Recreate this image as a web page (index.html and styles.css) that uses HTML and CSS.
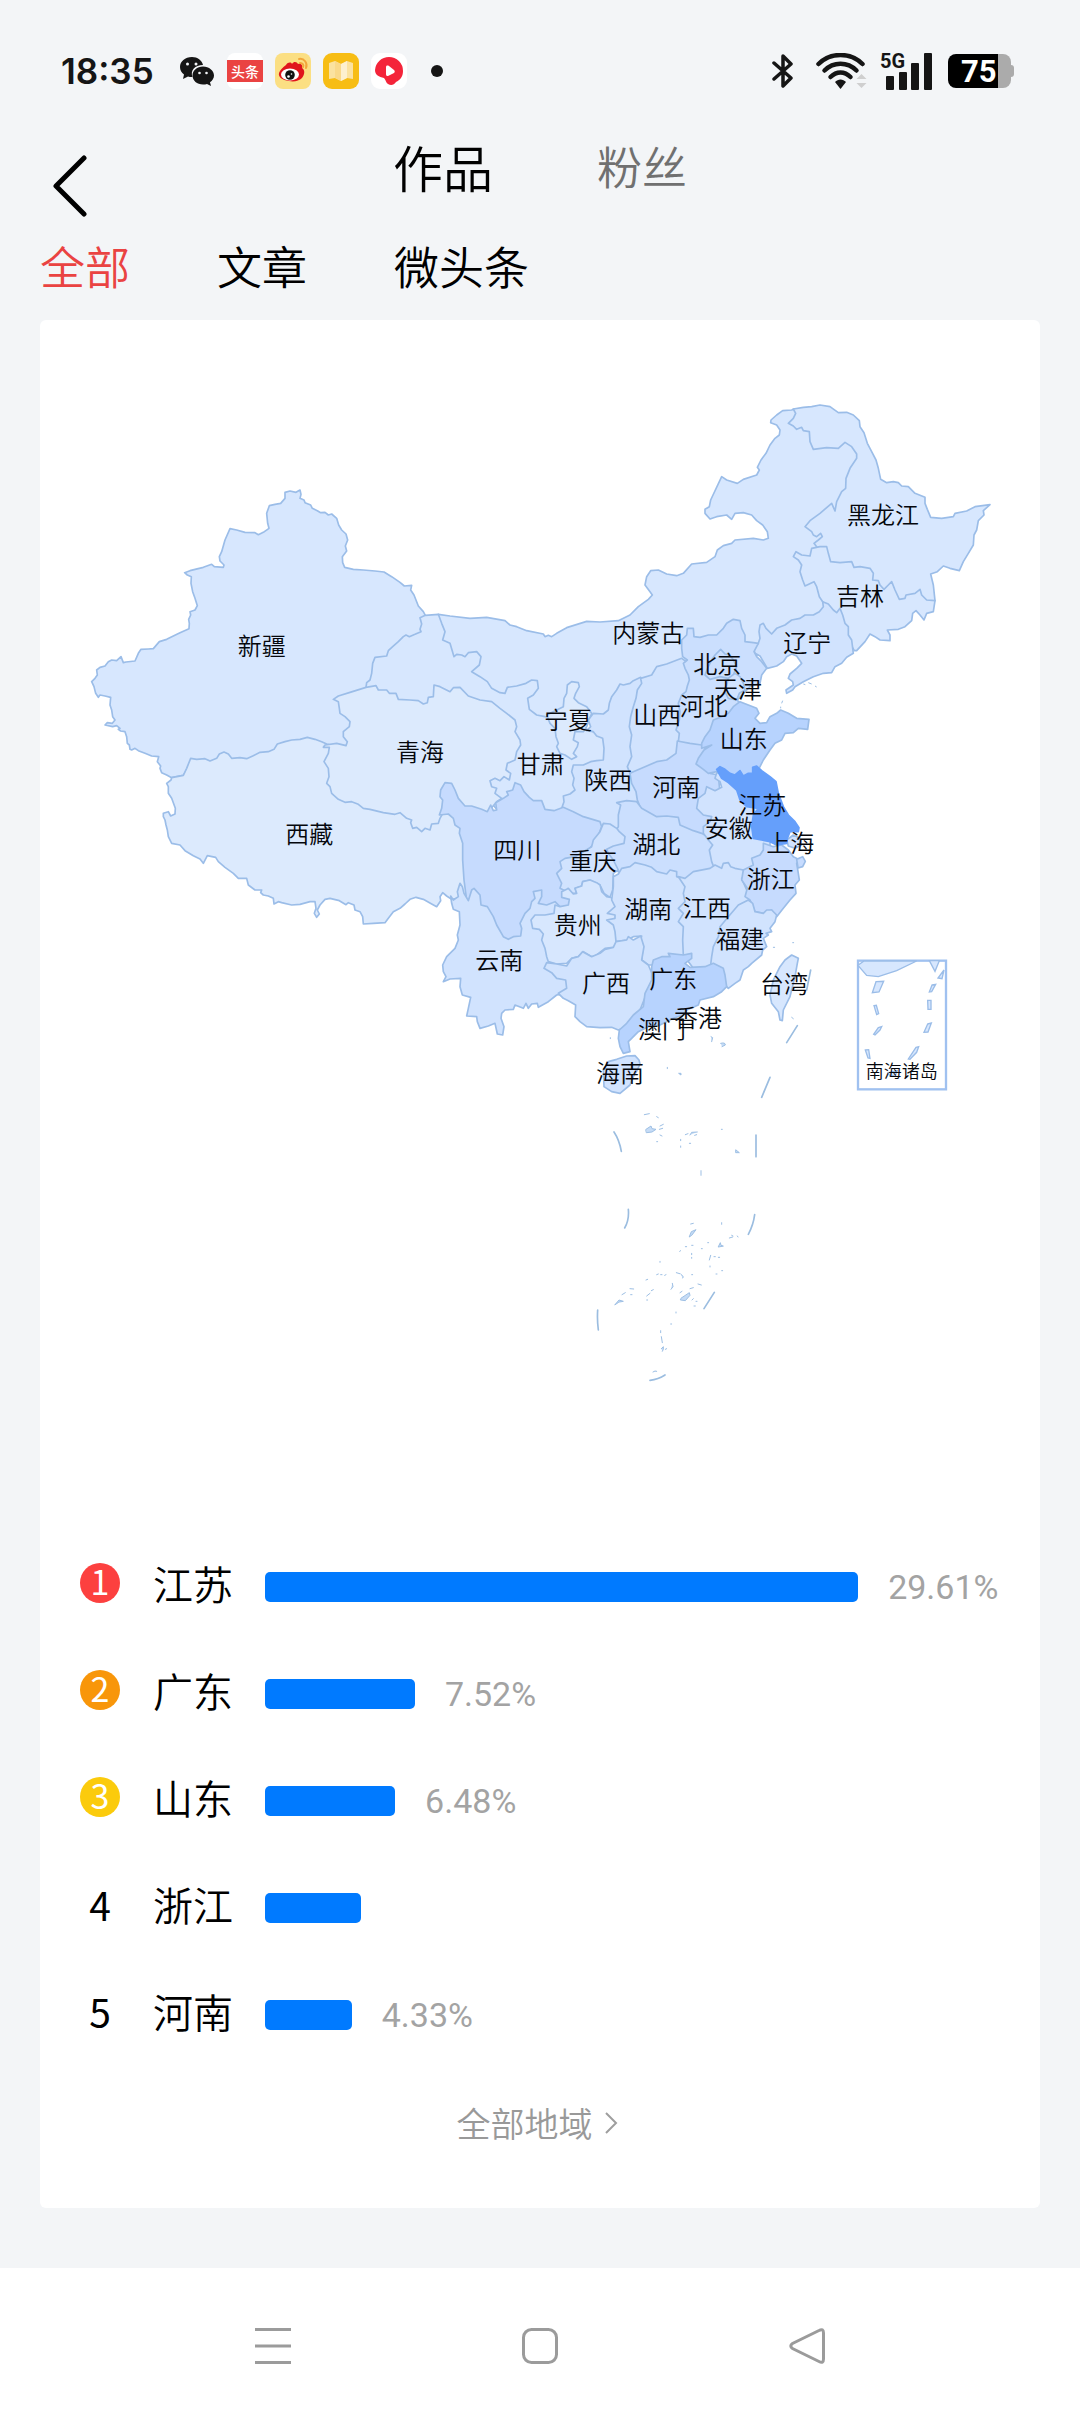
FILE: index.html
```html
<!DOCTYPE html>
<html lang="zh-CN">
<head>
  <meta charset="UTF-8" />
  <meta name="viewport" content="width=device-width, initial-scale=1.0" />
  <title>作品 - 地域分布</title>
  <link rel="stylesheet" href="styles.css">
</head>
<body>
  <div class="status">
    <span class="time">18:35</span>
    <div class="apps">
      <svg class="app" viewBox="0 0 36 36">
        <path d="M13 4C6 4 1 8.500 1 14c0 3 1.500 5.500 4 7.500L4 26l5-2.500c1.500.4 3 .6 4.500.5C11 17 16 12 24 12 23 7.500 18.500 4 13 4z" fill="#151515"/>
        <path d="M24 13.500c-6 0-10.500 4-10.500 9S18 31.500 24 31.500c1.500 0 2.800-.2 4-.6l4 2-1-3.600c2.400-1.700 4-4 4-6.800 0-5-5-9-11-9z" fill="#151515"/>
        <g fill="#f3f5f7"><circle cx="8.500" cy="11" r="1.500"/><circle cx="17" cy="11" r="1.500"/><circle cx="20.500" cy="20" r="1.300"/><circle cx="27.500" cy="20" r="1.300"/></g>
      </svg>
      <div class="toutiao"><span>头条</span></div>
      <svg class="app" viewBox="0 0 36 36">
        <rect width="36" height="36" rx="8" fill="#fbdf83"/>
        <path d="M11 12c2-3 5-3 6-1 2-3 5-2 6 0 3-1 5 1 4 4 3 2 3 6 0 10-3 3-8 4-13 3C7 27 3 24 4 20c1-3 4-6 7-8z" fill="#e0141c"/>
        <ellipse cx="15" cy="21.500" rx="9" ry="6" fill="#fff"/>
        <circle cx="15" cy="22" r="4.800" fill="#111"/><circle cx="13.500" cy="23.500" r="1.300" fill="#fff"/><circle cx="16.500" cy="21" r=".8" fill="#fff"/>
        <path d="M24 6c5-1 9 4 7 9M25 10c3 0 4 2 3 4" fill="none" stroke="#f2a63b" stroke-width="2" stroke-linecap="round"/>
      </svg>
      <svg class="app" viewBox="0 0 36 36">
        <rect width="36" height="36" rx="9" fill="#f7bd14"/>
        <path d="M6 10l6-2 6 3 6-3 6 2v16l-6-1-6 3-6-3-6 1z" fill="#fbe2a0"/>
        <path d="M18 11l6-3v17l-6 3z" fill="#fdf0cf"/><path d="M12 8l6 3v17l-6-3z" fill="#fad98a"/>
      </svg>
      <svg class="app" viewBox="0 0 36 36">
        <rect width="36" height="36" rx="9" fill="#fff"/>
        <path d="M18 4a14 14 0 0 1 14 14c0 6-3 9-7 11-2 3-5 4-8 2-2-1-2-4-4-6-5-1-9-3-9-8A14 14 0 0 1 18 4z" fill="#f4243a"/>
        <path d="M15 14c0-1 1-2 3-1l5 4c1 1 1 2 0 3l-6 3c-1 0-2 0-2-2z" fill="#fff"/>
      </svg>
    </div>
    <span class="more"></span>
    <div class="signals">
      <svg class="bluetooth" viewBox="0 0 22 36"><path d="M2 10l17 15-8 8V3l8 8L2 26" fill="none" stroke="#151515" stroke-width="3.500" stroke-linecap="round" stroke-linejoin="round"/></svg>
      <svg class="wifi" viewBox="0 0 52 36">
        <g fill="none" stroke="#151515" stroke-width="4.500" stroke-linecap="round"><path d="M2.500 11c12-12 32-12 44 0"/><path d="M8.500 17.500c9-9 23-9 32 0"/><path d="M14.500 24c6-6 14-6 20 0"/></g>
        <path d="M19 29c3-3.500 8-3.500 11 0l-5.500 7z" fill="#151515"/>
        <path d="M40.500 26l5-5 5 5zM40.500 30l5 5 5-5z" fill="#cfcfcf"/>
      </svg>
      <svg class="cell" viewBox="0 0 52 38">
        <text x="0" y="16" class="net">5G</text>
        <g fill="#151515"><rect x="6" y="24" width="8" height="14" rx="1"/><rect x="19" y="20" width="8" height="18" rx="1"/><rect x="31" y="11" width="8" height="27" rx="1"/><rect x="44" y="1" width="8" height="37" rx="1"/></g>
      </svg>
      <div class="battery"><span>75</span></div>
    </div>
  </div>

  <header class="header">
    <button class="back" aria-label="返回">
      <svg viewBox="0 0 36 62"><path d="M32 3L4 31l28 28" fill="none" stroke="#000" stroke-width="5" stroke-linecap="round" stroke-linejoin="round"/></svg>
    </button>
    <div class="tabs">
      <button class="tab active">作品</button>
      <button class="tab">粉丝</button>
    </div>
  </header>

  <nav class="filters">
    <button class="filter active">全部</button>
    <button class="filter">文章</button>
    <button class="filter">微头条</button>
  </nav>

  <main class="card">
    <svg class="map" viewBox="-1080 -720 3000 3540" role="img">
      <g class="land">
        <!-- 新疆 西藏 -->
        <g transform="translate(-990 -300)">
          <path class="c2" d="M645 97L660 93 678 97 690 90 693 103 690 115 702 120 705 128 722 135 727 145 742 152 752 158 765 157 775 165 785 162 800 175 806 195 815 210 828 222 833 240 826 258 830 273 817 290 818 308 824 322 850 328 880 330 915 333 942 336 965 350 990 367 1003 378 1025 376 1022 390 1032 405 1045 438 1060 455 1066 466 1080 520 1000 600 930 650 920 720 850 850 800 880 640 900 350 930 340 946 305 953 290 945 275 938 270 925 272 918 262 905 266 890 245 888 225 880 205 872 195 865 185 870 180 868 178 855 172 850 170 830 165 815 152 813 145 808 150 805 140 797 128 800 105 795 112 788 127 790 135 780 128 770 125 750 120 735 122 712 105 708 90 705 85 712 77 700 72 680 65 665 75 655 82 645 80 630 90 622 105 618 115 605 125 600 140 602 153 590 160 608 168 606 195 603 205 580 213 568 235 567 250 566 268 545 290 538 330 518 357 506 358 490 356 478 362 465 360 455 375 450 382 437 375 415 368 395 363 370 364 350 352 345 344 338 360 332 400 322 425 313 433 320 460 322 462 315 450 303 448 290 455 275 465 240 480 206 500 210 525 217 555 218 565 224 580 217 597 205 593 190 590 160 598 137 615 133 632 130 645 115Z"/>
          <path class="c1" d="M305 953L340 946 350 925 362 895 380 898 405 896 420 903 440 895 448 882 462 876 475 882 485 895 510 893 530 896 548 888 570 877 595 875 612 868 622 852 645 845 665 840 690 838 712 832 735 838 755 845 770 852 800 860 900 1000 1110 1030 1150 1070 1200 1100 1200 1310 1145 1318 1130 1308 1118 1298 1110 1310 1112 1322 1100 1340 1085 1332 1060 1318 1038 1312 1020 1318 1005 1332 990 1345 970 1355 955 1375 945 1388 910 1390 880 1392 878 1370 870 1355 855 1350 852 1335 835 1328 828 1334 808 1322 780 1315 765 1318 750 1335 742 1350 748 1362 740 1372 733 1360 738 1345 735 1325 720 1325 690 1333 665 1335 635 1328 625 1325 612 1332 610 1315 595 1308 580 1305 572 1298 575 1290 555 1290 535 1275 530 1255 505 1255 490 1240 465 1222 445 1205 437 1192 412 1187 400 1210 390 1197 370 1187 345 1172 330 1155 305 1150 295 1130 292 1110 288 1095 285 1080 280 1070 280 1060 295 1055 302 1068 315 1062 316 1045 305 1015 295 1000 295 980 290 970 303 960Z"/>
        </g>
        <!-- 内蒙古 -->
        <path class="c2" d="M115 163L150 168 210 175 260 172 315 182 330 195 350 200 380 212 430 222 435 230 445 226 455 230 470 220 500 203 560 184 600 186 655 182 690 165 715 140 745 118 757 105 750 95 735 75 740 50 752 32 775 30 800 42 830 47 850 40 875 12 920 7 945 -10 952 -30 970 -43 995 -50 1005 -60 1060 -65 1090 -60 1105 -65 1102 -85 1088 -105 1070 -118 1055 -135 1030 -142 1005 -140 995 -122 980 -135 950 -130 930 -123 915 -140 915 -152 928 -160 932 -180 965 -250 980 -240 1012 -230 1030 -242 1070 -255 1078 -270 1072 -278 1083 -300 1098 -320 1110 -345 1125 -365 1138 -375 1140 -390 1130 -405 1112 -412 1113 -420 1130 -435 1148 -448 1175 -450 1182 -453 1260 -390 1380 -340 1380 -160 1280 -80 1270 20 1280 100 1290 160 1260 180 1150 250 1060 290 880 330 800 380 700 450 640 500 500 470 440 490 350 430 320 420 200 370 150 330 80 200Z"/>
        <!-- 黑龙江 吉林 辽宁 -->
        <g transform="translate(780 -540)">
          <path class="c2" d="M400 87L430 82 455 80 480 75 510 80 535 98 560 97 580 105 598 122 600 140 612 158 622 190 635 215 648 240 655 265 662 298 680 308 700 305 715 308 725 318 745 320 765 340 795 352 795 370 802 388 812 412 845 415 880 410 885 400 920 393 945 380 990 374 970 392 972 405 955 422 950 450 942 465 940 495 925 520 910 545 898 572 870 565 850 558 832 575 812 582 820 615 825 662 760 680 690 680 600 620 520 600 480 520 470 500 462 490 475 480 487 470 482 460 470 470 460 465 455 455 435 440 450 422 480 400 515 370 525 393 530 365 545 335 557 325 558 295 570 265 590 235 590 222 575 200 555 187 535 205 500 203 460 208 450 185 448 155 430 152 425 142 410 148 400 138 385 130 400 115 407 100Z"/>
          <path class="c2" d="M400 530L408 515 425 525 450 528 455 505 480 500 500 500 505 520 512 545 540 548 575 545 582 562 600 560 630 565 640 580 638 600 655 602 660 615 672 628 685 615 695 605 705 630 718 658 735 655 738 645 765 640 780 628 785 645 800 660 825 662 820 695 800 700 792 720 780 705 768 692 758 700 755 722 735 740 715 748 682 750 690 765 690 782 660 780 645 770 630 762 615 785 590 812 583 812 540 740 500 690 488 665 478 650 470 620 462 605 435 618 428 600 420 575 425 555 415 540Z"/>
          <path class="c3" d="M300 735L310 730 318 745 335 762 350 745 375 735 395 720 420 715 435 705 460 705 478 695 490 680 488 665 505 672 520 690 530 698 540 685 548 705 555 730 565 740 565 765 575 780 580 820 560 832 545 850 525 860 515 878 490 880 460 890 430 905 405 920 398 930 380 940 378 930 400 915 398 905 385 895 390 882 410 865 425 850 410 828 395 822 380 830 370 845 350 858 322 865 310 845 300 828 285 820 280 805 295 790 300 775 297 755Z"/>
        </g>
        <!-- 甘肃 青海 宁夏 -->
        <path class="c2" d="M76 166L115 163 125 190 135 215 128 240 150 250 162 290 170 283 185 285 195 290 205 278 230 275 243 290 238 315 215 335 240 350 262 365 275 385 300 398 315 400 322 382 350 378 378 370 395 360 412 362 415 385 400 405 383 415 388 448 410 465 435 470 500 480 540 500 620 530 625 610 560 640 540 720 500 770 400 760 300 760 250 700 250 500 100 450 0 430 -80 450 -102 382 -100 368 -90 360 -85 340 -82 310 -75 292 -40 288 -35 272 -22 260 -5 245 10 230 18 225 28 230 45 223 63 215 60 208 65 192 60 173Z"/>
        <path class="c1" d="M-200 418L-185 408 -150 397 -102 382 -72 377 -65 390 -40 390 -32 400 -12 400 -5 418 30 420 55 422 70 432 82 428 85 412 100 410 102 375 120 380 150 395 160 383 180 382 205 408 240 420 275 425 300 445 320 460 345 480 350 500 345 515 360 540 362 555 350 575 345 600 322 610 318 630 332 640 328 660 312 650 300 662 285 655 270 662 275 680 290 685 285 700 305 715 290 725 265 755 250 780 180 760 150 720 120 775 115 790 95 792 90 810 75 805 65 815 50 802 38 805 32 788 35 780 20 775 0 758 -15 763 -50 758 -90 748 -110 745 -125 733 -145 725 -165 727 -185 718 -205 700 -210 680 -220 670 -213 650 -215 625 -228 605 -215 580 -212 562 -230 562 -225 555 -190 550 -162 557 -158 545 -170 530 -170 515 -152 500 -150 485 -165 470 -180 460 -182 445 -185 425Z"/>
        <path class="c1" d="M490 440L492 415 500 400 502 375 515 365 535 368 538 380 527 400 522 415 535 428 560 440 575 460 560 500 550 515 525 515 520 540 535 548 532 560 520 580 530 590 515 598 495 585 480 580 470 560 475 550 468 530 465 505 450 490 440 465Z"/>
        <!-- 陕西 山西 河北 北京 天津 -->
        <path class="c3" d="M722 352L700 362 690 370 670 375 660 372 650 390 635 410 628 430 625 450 610 462 580 460 565 480 572 500 560 512 580 515 590 528 608 535 612 565 610 600 590 602 572 605 550 615 520 615 515 635 522 655 518 675 525 690 510 702 490 708 492 725 485 745 500 770 600 820 640 830 720 770 720 700 740 640 740 400Z"/>
        <path class="c3" d="M722 355L755 345 770 320 800 312 845 295 880 320 880 400 860 540 850 600 760 660 690 640 682 620 695 590 690 560 695 525 688 500 692 470 700 440 708 415 712 390 725 370Z"/>
        <path class="c4" d="M845 240L860 225 862 205 880 205 882 230 900 232 925 225 950 225 970 205 980 190 1000 178 1020 182 1025 205 1035 225 1035 245 1060 248 1075 250 1062 275 1070 290 1085 305 1100 325 1085 345 1080 370 1050 380 1030 400 1012 420 1020 432 1000 470 950 520 920 560 890 580 840 560 835 545 838 520 828 510 838 480 840 455 835 430 845 405 858 395 862 378 868 360 865 345 855 325 850 310 862 300 848 290 845 265Z"/>
        <path class="c4" d="M962 268L975 282 990 285 1000 300 1010 320 1000 345 985 355 960 350 930 358 915 345 925 320 935 300 945 285Z"/>
        <path class="c3" d="M985 355L1005 340 1020 350 1030 370 1035 390 1018 400 1010 420 985 415 975 395 980 375Z"/>
        <!-- 河南 山东 四川 湖北 重庆 安徽 -->
        <path class="c5" d="M832 543L870 550 905 555 930 580 930 640 955 645 960 700 950 780 910 830 840 820 760 800 720 740 712 720 708 695 695 670 690 640 700 635 735 620 770 605 800 600 828 580Z"/>
        <path class="c6" d="M1020 425L1045 435 1070 445 1077 460 1065 475 1080 490 1100 488 1110 470 1130 460 1142 450 1165 460 1190 475 1227 478 1223 508 1195 505 1180 518 1155 520 1145 540 1125 550 1110 570 1090 600 1075 630 1050 660 960 640 950 635 925 640 910 628 888 612 895 595 912 570 935 555 905 565 905 550 915 530 930 510 940 480 965 470 985 460 1000 440Z"/>
        <path class="c5" d="M118 765L125 745 128 720 120 710 122 690 135 668 155 670 165 690 175 715 195 738 215 738 245 748 262 755 272 735 280 752 290 750 287 728 310 715 325 705 320 695 338 690 345 668 362 675 372 695 388 712 400 722 425 722 435 748 462 752 490 742 520 755 550 770 600 785 605 800 590 840 540 900 530 980 520 1040 460 1080 420 1100 330 1180 280 1120 200 1020 192 960 188 900 188 850 178 820 180 805 165 795 160 775 145 762Z"/>
        <path class="c4" d="M655 765L662 735 650 728 680 722 710 725 725 745 770 770 800 768 835 772 840 795 880 812 905 820 960 850 950 930 860 965 780 960 700 950 640 930 620 930 620 850 655 800Z"/>
        <path class="c3" d="M610 790L630 792 650 805 658 815 675 830 672 850 640 858 620 868 625 880 640 900 655 930 640 940 638 990 630 1012 612 1000 600 975 570 960 548 965 545 978 525 985 530 1000 510 1000 480 985 485 970 470 940 485 925 480 905 495 895 525 890 550 875 575 860 580 840 600 815Z"/>
        <path class="c3" d="M950 638L945 655 960 665 965 682 945 692 920 680 915 700 895 715 890 745 910 765 935 770 930 785 910 800 910 820 925 840 938 855 928 870 935 905 945 930 1020 960 1080 930 1110 860 1110 800 1060 700 980 640Z"/>
        <!-- 云南 贵州 湖南 广西 -->
        <g transform="translate(0 900)">
          <path class="c3" d="M152 108L160 120 175 110 172 95 180 70 187 80 192 100 205 122 215 90 222 85 240 105 243 135 262 140 280 170 290 195 310 230 325 238 340 230 362 228 365 205 360 190 375 160 390 145 395 125 405 115 400 95 425 90 425 110 415 130 440 135 465 125 500 160 480 260 480 340 520 380 478 404 470 405 445 425 415 442 412 430 395 432 385 445 378 430 370 445 345 435 340 448 315 450 305 460 303 475 312 500 308 525 292 522 285 490 265 498 240 505 232 485 230 470 200 468 205 445 212 412 187 405 180 380 182 355 150 357 130 365 138 350 130 335 128 315 140 290 165 265 175 240 172 225 180 195 178 155 160 148 155 130Z"/>
          <path class="c2" d="M505 85L520 102 530 100 525 85 545 78 548 65 570 60 590 68 600 75 605 95 620 110 632 112 660 130 660 240 640 262 615 265 590 285 575 290 550 275 535 290 515 295 500 310 470 312 445 305 440 290 435 265 425 240 430 222 418 208 398 205 393 180 405 165 435 165 462 160 465 135 480 140 505 135 508 118 485 112 485 95 500 88Z"/>
          <path class="c3" d="M640 50L655 42 665 25 690 20 705 8 735 15 755 22 770 35 800 42 810 30 830 35 830 50 870 62 880 200 870 275 830 300 790 310 770 315 745 315 725 300 728 270 722 240 725 228 700 230 680 240 648 245 645 215 640 195 620 180 645 175 645 165 622 160 645 140 635 120 640 80Z"/>
          <path class="c3" d="M432 325L440 308 470 312 500 318 515 295 535 290 548 275 575 290 600 280 615 268 640 262 648 245 680 240 685 230 700 240 722 228 732 260 725 300 745 315 760 350 720 450 680 500 655 510 635 502 600 503 560 500 540 485 525 470 527 435 505 422 490 415 475 400 500 385 497 360 470 355 455 338Z"/>
        </g>
        <!-- 江西 浙江 福建 广东 江苏 上海 -->
        <path class="c3" d="M835 950L855 955 880 935 930 925 945 915 965 925 970 910 985 908 992 920 1005 925 1030 930 1035 945 1025 955 1038 985 1060 1030 1010 1080 970 1120 960 1200 930 1225 880 1225 850 1185 848 1140 850 1100 835 1085 850 1060 835 1045 855 1025 850 1000 855 980Z"/>
        <g transform="translate(780 420)">
          <path class="c5" d="M310 430L340 440 365 435 385 450 400 470 420 480 410 490 415 520 418 540 405 555 408 580 390 600 370 625 350 650 335 630 310 640 285 635 270 600 255 590 262 565 245 540 250 510 280 495 275 475 300 465 310 450Z"/>
          <path class="c5" d="M410 478L428 470 436 484 428 500 414 504Z"/>
          <path class="c3" d="M265 600L278 610 285 635 310 640 320 630 335 630 350 645 345 665 330 685 335 695 318 700 325 705 310 715 320 740 308 750 305 765 275 790 265 800 250 810 240 840 225 850 205 865 190 850 150 810 155 770 160 740 175 710 180 680 205 650 235 615Z"/>
        </g>
        <path class="c6" d="M755 1220L760 1200 785 1190 810 1190 805 1180 850 1185 875 1180 875 1195 855 1210 870 1222 915 1220 940 1210 970 1225 975 1245 980 1280 965 1295 940 1310 900 1320 895 1335 860 1350 850 1365 820 1375 780 1395 745 1400 715 1415 695 1435 685 1445 690 1475 670 1480 660 1460 655 1435 658 1410 680 1390 700 1365 730 1340 735 1300 755 1260Z"/>
        <path class="c3" d="M1160 840L1180 825 1200 835 1205 855 1185 865 1165 858Z"/>
        <path class="c7" d="M950 628L960 620 975 628 990 640 1005 645 1020 632 1030 648 1045 640 1058 640 1058 622 1070 618 1085 632 1110 650 1128 665 1135 700 1150 740 1165 765 1185 785 1197 803 1195 815 1170 815 1162 835 1160 850 1130 855 1110 845 1060 835 1055 800 1060 765 1075 745 1040 740 1020 720 1010 690 985 668 965 655Z"/>
        <!-- 海南 台湾 -->
        <path class="c3" d="M610 1530L625 1505 650 1498 680 1488 705 1487 717 1500 720 1512 712 1530 700 1550 690 1575 660 1600 635 1595 612 1580Z"/>
        <path class="c2" d="M1175 1185L1195 1195 1192 1210 1185 1250 1170 1310 1150 1350 1147 1382 1140 1380 1135 1355 1115 1330 1110 1305 1120 1260 1140 1220 1155 1200Z"/>
      </g>

      <!-- 南海断续线与岛礁 -->
      <g class="sea" transform="translate(480 1320)">
        <path d="M162 396Q178 420 184 454M588 405V470M205 628Q208 660 194 684M584 644Q580 675 565 703M463 877L432 926M113 930Q111 960 115 990M270 1141Q295 1138 315 1125M712 77L680 128M630 232L605 292M752 -90L740 -30"/>
        <path class="isle" d="M453 110l5 3-3 12M482 130q14-4 14 5l-10 5M357 220h6v4zM528 450l10 8h-10zM253 344l15-3M290 350l5 3M258 388l15-10 3 8 12 2-12 8-16 2zM300 378l10-5M298 388l10-3M300 405l6 3M376 404l8-3M390 405l5-8 17-1M404 406l6-2M388 710l6-15 14-6-12 16zM392 672l8-2M485 668v5M475 740l6-12 2 8 6 2zM508 714l10-3M515 706l4 2M532 708l2 3M448 780l4-14M450 798v3M462 770h4M475 772h4M395 736h4M376 740h4M359 754l3-2M395 760v4M395 772v3M300 784v3M443 728h3M424 746h3M485 812h3M468 822h3M290 824l5-2M302 824h4M314 826l4-2M258 840l5-2M349 818l10 3M362 822l8 8-2 4M395 824h3M414 852l10 3M333 868l6-8-2-10M186 884l10-6M210 866l11 1M212 884h4M165 914l12-14 13 4-12 2zM260 888l10-8M274 872l6-3M260 900h3M360 878l6-4M364 894l24-16 2 8-14 16-14-2zM390 866l10-3M396 900l4-4M408 904h3M402 918h4M348 936v3M332 972h3M302 992v6M304 1010l3 18M304 1046l6-6v8l-3 6M316 1048l4-2M279 1116l6-3 5 1M423 512v14M362 418v4M362 438v4M388 430h4M290 425h3M484 388h3M322 202v4M151 113v3M695 52l5 4M640 -158h4M698 -172h3"/>
      </g>
      <g class="isle" transform="translate(780 -540)"><path d="M430 912l6 2M445 908l10 4M465 918l5 3M368 962l-3 8M362 980v5"/></g>

      <!-- 南海诸岛 -->
      <g class="inset" transform="translate(780 420)">
        <rect x="594" y="782" width="264" height="386" class="frame"/>
        <path d="M594 796L612 783H770Q735 800 710 812L655 830 620 826ZM808 782H838L825 814ZM852 810L846 836 834 834ZM648 845L671 844 657 876 637 878ZM816 855L827 853 815 875 808 876ZM642 917L649 916 656 941 650 944ZM803 901H813V928H804ZM655 983L665 980 660 990 645 1005 641 1003ZM803 972L814 969 804 996 792 997ZM616 1050L626 1049 630 1075 624 1074ZM768 1042L776 1040 770 1057 750 1078 745 1077ZM684 1118L712 1112 706 1126 690 1128Z"/>
      </g>

      <g class="names">
        <text x="-415" y="285">新疆</text>
        <text x="60" y="604">青海</text>
        <text x="-272" y="850">西藏</text>
        <text x="745" y="245">内蒙古</text>
        <text x="1449" y="-108">黑龙江</text>
        <text x="1380" y="135">吉林</text>
        <text x="1222" y="275">辽宁</text>
        <text x="952" y="338">北京</text>
        <text x="1014" y="415">天津</text>
        <text x="911" y="465">河北</text>
        <text x="772" y="492">山西</text>
        <text x="1031" y="565">山东</text>
        <text x="504" y="508">宁夏</text>
        <text x="422" y="640">甘肃</text>
        <text x="625" y="686">陕西</text>
        <text x="829" y="707">河南</text>
        <text x="1087" y="762">江苏</text>
        <text x="986" y="830">安徽</text>
        <text x="1171" y="875">上海</text>
        <text x="352" y="897">四川</text>
        <text x="578" y="931">重庆</text>
        <text x="769" y="879">湖北</text>
        <text x="1112" y="985">浙江</text>
        <text x="745" y="1074">湖南</text>
        <text x="921" y="1072">江西</text>
        <text x="1021" y="1165">福建</text>
        <text x="533" y="1123">贵州</text>
        <text x="298" y="1226">云南</text>
        <text x="618" y="1296">广西</text>
        <text x="820" y="1283">广东</text>
        <text x="894" y="1401">香港</text>
        <text x="786" y="1435">澳门</text>
        <text x="660" y="1565">海南</text>
        <text x="1152" y="1299">台湾</text>
        <text x="1505" y="1553" class="small">南海诸岛</text>
      </g>
    </svg>

    <ol class="rank">
      <li><span class="num first">1</span><span class="name">江苏</span><div class="track"><div class="bar" style="width: 80.7%"></div><span class="pct">29.61%</span></div></li>
      <li><span class="num second">2</span><span class="name">广东</span><div class="track"><div class="bar" style="width: 20.4%"></div><span class="pct">7.52%</span></div></li>
      <li><span class="num third">3</span><span class="name">山东</span><div class="track"><div class="bar" style="width: 17.7%"></div><span class="pct">6.48%</span></div></li>
      <li><span class="num">4</span><span class="name">浙江</span><div class="track"><div class="bar" style="width: 13.1%"></div></div></li>
      <li><span class="num">5</span><span class="name">河南</span><div class="track"><div class="bar" style="width: 11.8%"></div><span class="pct">4.33%</span></div></li>
    </ol>

    <a class="all" href="#">全部地域
      <svg viewBox="0 0 14 24"><path d="M2 2l10 10L2 22" fill="none" stroke="#9e9e9e" stroke-width="2"/></svg>
    </a>
  </main>

  <nav class="navbar">
    <button aria-label="最近任务"><svg viewBox="0 0 36 36"><path d="M0 1.500h36M0 18h36M0 34.500h36" stroke="#9b9b9b" stroke-width="3"/></svg></button>
    <button aria-label="主页"><svg viewBox="0 0 36 36"><rect x="1.500" y="1.500" width="33" height="33" rx="8" fill="none" stroke="#9b9b9b" stroke-width="3"/></svg></button>
    <button aria-label="后退"><svg viewBox="0 0 36 36"><path d="M30 2.500Q34.500 0 34.500 5V31Q34.500 36 30 33.500L3.500 20.500Q0 18 3.500 15.500Z" fill="none" stroke="#9b9b9b" stroke-width="3"/></svg></button>
  </nav>
</body>
</html>
```
FILE: styles.css
```css
* { box-sizing: border-box; margin: 0; padding: 0; }
body {
  display: flex;
  flex-direction: column;
  min-height: 100vh;
  background: #f3f5f7;
  color: #000;
  font-family: 'Noto Sans CJK SC', sans-serif;
  font-weight: 350;
}
button { background: none; border: none; font: inherit; color: inherit; cursor: pointer; }
svg { display: block; }

.status { display: flex; align-items: center; height: 142px; padding: 0 69px 0 61px; }
.time { width: 95px; font-family: Inter, sans-serif; font-weight: 600; font-size: 35px; color: #151515; }
.apps { display: flex; gap: 12px; margin-left: 23px; }
.app, .toutiao { width: 36px; height: 36px; }
.toutiao { display: flex; align-items: center; background: #fff; border-radius: 8px; }
.toutiao span {
  width: 36px;
  line-height: 22px;
  background: #ea4342;
  color: #fff;
  font-size: 14px;
  font-weight: 500;
  text-align: center;
}
.more { width: 12px; height: 12px; margin-left: 24px; border-radius: 50%; background: #151515; }
.signals { display: flex; align-items: center; margin-left: auto; }
.bluetooth { width: 22px; height: 36px; margin-right: 22px; }
.wifi { width: 52px; height: 36px; margin-right: 12px; }
.cell { width: 52px; height: 38px; margin-right: 16px; overflow: visible; }
.net { font-family: Roboto, sans-serif; font-weight: 700; font-size: 20px; fill: #151515; }
.battery {
  position: relative;
  width: 63px;
  height: 34px;
  border-radius: 8px;
  background: linear-gradient(90deg, #000 50px, #ababab 50px);
  color: #fff;
  font: 700 31px/36px Roboto, sans-serif;
  padding-left: 13px;
}
.battery::after {
  content: "";
  position: absolute;
  right: -3px;
  top: 11px;
  width: 4px;
  height: 12px;
  border-radius: 0 3px 3px 0;
  background: #ababab;
}

.header { display: grid; grid-template-columns: 1fr auto 1fr; height: 84px; padding: 0 52px; }
.back { justify-self: start; align-self: end; margin-bottom: 9px; }
.back svg { width: 36px; height: 62px; }
.tabs { display: flex; gap: 104px; height: 48px; align-items: center; }
.tab { font-size: 45px; line-height: 54px; color: #707070; }
.tab.active { font-size: 50px; color: #000; }

.filters { display: flex; gap: 87px; height: 94px; padding: 0 40px; }
.filter { align-self: flex-start; font-size: 45px; line-height: 80px; }
.filter.active { color: #ea4342; }

.card { margin: 0 40px; padding-bottom: 52px; background: #fff; border-radius: 6px; }
.map { width: 100%; }
.land path { stroke: #9bbde8; stroke-width: 5; stroke-linejoin: round; }
.land .c1 { fill: #dceafd; }
.land .c2 { fill: #d7e7fe; }
.land .c3 { fill: #d1e3fe; }
.land .c4 { fill: #cbdffe; }
.land .c5 { fill: #c6dbfe; }
.land .c6 { fill: #b7d3fe; }
.land .c7 { fill: #659ffb; stroke: #659ffb; }
.sea path { fill: none; stroke: #9bbde0; stroke-width: 5; stroke-linecap: round; }
.isle, .sea .isle { fill: #c6dcf6; stroke: #9dbfe4; stroke-width: 3; }
.inset path { fill: #d7e7fe; stroke: #9bbde8; stroke-width: 4; }
.frame { fill: none; stroke: #a0c1f0; stroke-width: 7; }
.names text { font-size: 72px; text-anchor: middle; fill: #05070c; }
.names .small { font-size: 54px; }

.rank { list-style: none; padding: 33px 40px 0; }
.rank li { display: flex; align-items: center; height: 107px; }
.num {
  width: 40px;
  height: 40px;
  margin-bottom: 8px;
  border-radius: 50%;
  font: 400 39px/40px 'Noto Sans CJK SC', sans-serif;
  text-align: center;
}
.first, .second, .third { color: #fff; font-size: 34px; line-height: 36px; }
.first { background: #fc403f; }
.second { background: #f8960a; }
.third { background: #fbcb0c; }
.name { flex: none; width: 80px; margin: 0 32px 8px 33px; font-size: 40px; white-space: nowrap; }
.track { flex: 1; display: flex; align-items: center; gap: 30px; }
.bar { height: 30px; border-radius: 5px; background: #007aff; }
.pct { font-family: Roboto, sans-serif; font-size: 34px; font-weight: 400; color: #a3a3a3; }

.all {
  display: flex;
  justify-content: center;
  align-items: center;
  gap: 11px;
  margin-top: 22px;
  padding-right: 6px;
  font-size: 34px;
  line-height: 66px;
  color: #999;
  text-decoration: none;
}
.all svg { width: 14px; height: 24px; }

.navbar { display: flex; justify-content: space-around; align-items: center; height: 144px; margin-top: auto; padding: 12px 140px 0; background: #fff; }
.navbar svg { width: 36px; height: 36px; }
```
